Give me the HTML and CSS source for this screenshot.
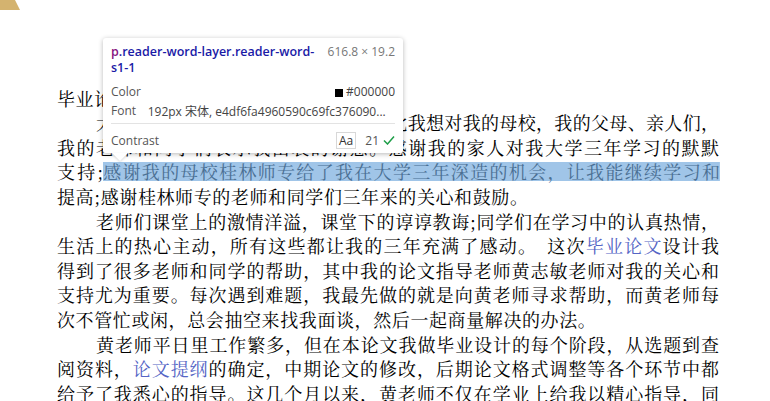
FILE: index.html
```html
<!DOCTYPE html>
<html lang="zh-CN">
<head>
  <meta charset="UTF-8">
  <title>毕业论文致谢</title>
  <meta name="viewport" content="width=device-width, initial-scale=1.0">
  <link rel="stylesheet" href="styles.css">
</head>
<body>

  <div class="corner"></div>

  <div class="page">
    <div class="line end">毕业论文致谢</div>
    <div class="line indent">大学三年学习时光已经接近尾声，在此我想对我的母校，我的父母、亲人们，</div>
    <div class="line">我的老师和同学们表示我由衷的谢意。感谢我的家人对我大学三年学习的默默</div>
    <div class="line split"><span class="lead">支持;</span><span class="hl">感谢我的母校桂林师专给了我在大学三年深造的机会，让我能继续学习和</span></div>
    <div class="line end">提高;感谢桂林师专的老师和同学们三年来的关心和鼓励。</div>
    <div class="line indent">老师们课堂上的激情洋溢，课堂下的谆谆教诲;同学们在学习中的认真热情，</div>
    <div class="line">生活上的热心主动，所有这些都让我的三年充满了感动。&ensp;这次<span class="link">毕业论文</span>设计我</div>
    <div class="line">得到了很多老师和同学的帮助，其中我的论文指导老师黄志敏老师对我的关心和</div>
    <div class="line">支持尤为重要。每次遇到难题，我最先做的就是向黄老师寻求帮助，而黄老师每</div>
    <div class="line end">次不管忙或闲，总会抽空来找我面谈，然后一起商量解决的办法。</div>
    <div class="line indent">黄老师平日里工作繁多，但在本论文我做毕业设计的每个阶段，从选题到查</div>
    <div class="line">阅资料，<span class="link">论文提纲</span>的确定，中期论文的修改，后期论文格式调整等各个环节中都</div>
    <div class="line">给予了我悉心的指导。这几个月以来，黄老师不仅在学业上给我以精心指导，同</div>
  </div>

  <!-- devtools element tooltip -->
  <div class="inspector">
    <div class="head">
      <div class="sel"><b>p</b>.reader-word-layer.reader-word-<br>s1-1</div>
      <div class="size">616.8 × 19.2</div>
    </div>
    <div class="row">
      <span class="label">Color</span>
      <span class="val right"><i class="swatch"></i>#000000</span>
    </div>
    <div class="row">
      <span class="label">Font</span>
      <span class="val">192px 宋体, e4df6fa4960590c69fc376090...</span>
    </div>
    <div class="sep"></div>
    <div class="row contrast">
      <span class="label">Contrast</span>
      <span class="aa">Aa</span>
      <span class="ratio">21</span>
      <svg class="check" width="12" height="10" viewBox="0 0 12 10"><polyline points="1,5.5 4.5,9 11,1.5" fill="none" stroke="#1e9e48" stroke-width="1.5"/></svg>
    </div>
  </div>

</body>
</html>
```

FILE: styles.css
```css
*{box-sizing:border-box}
body{
  margin:0;background:#fff;color:#000;
  font-family:"Noto Serif CJK SC","Noto Sans CJK SC",serif;
  overflow:hidden
}
.corner{
  position:absolute;left:0;top:0;width:20px;height:10px;
  background:#d4b36f;clip-path:polygon(0 0,15px 0,20px 10px,0 10px)
}
.page{padding:85.7px 0 0 57px;width:719px}
.line{
  height:24.6px;line-height:24.6px;font-size:18px;
  text-align:justify;text-align-last:justify
}
.indent{padding-left:39px}
.end{text-align-last:left;letter-spacing:.6px}
.link{color:#5565c5}
.split{display:flex}
.lead{flex:none;width:46.2px}
.hl{
  flex:none;width:616.8px;text-align:justify;text-align-last:justify;
  color:#4a6f93;
  background:linear-gradient(#a0c5e8,#a0c5e8) center/100% 19.2px no-repeat
}

/* inspector tooltip */
.inspector{
  position:absolute;left:103px;top:38px;width:300px;
  padding:6px 8px 1px;background:#fff;border-radius:3px;
  box-shadow:0 1px 5px rgba(0,0,0,.28);
  font-family:"Open Sans","Noto Sans CJK SC",sans-serif;font-size:12px;color:#555
}
.inspector::after{
  content:"";position:absolute;left:9px;bottom:-8px;
  border:8px solid transparent;border-bottom:none;border-top-color:#fff;
  filter:drop-shadow(0 1px 1px rgba(0,0,0,.15))
}
.head{display:flex;justify-content:space-between;height:32px}
.sel{color:#1a1aa6;font-weight:600;font-size:12.5px;line-height:16px;white-space:nowrap}
.sel b{color:#881280;font-weight:600}
.size{color:#777;line-height:16px}
.row{display:flex;align-items:center;height:19px}
.head+.row{margin-top:6px}
.label{flex:none;width:36.7px}
.val{flex:1;white-space:nowrap;overflow:hidden;color:#444}
.right{text-align:right}
.swatch{
  display:inline-block;width:8px;height:8px;background:#000;
  margin-right:3px;vertical-align:-0.5px
}
.sep{height:1px;background:#e3e3e3;margin-top:3px}
.contrast{height:24px;margin-top:4px}
.aa{
  margin-left:auto;border:1px solid #d8d8d8;height:17px;line-height:15px;
  padding:0 2px;color:#333
}
.ratio{margin-left:9px;color:#555}
.check{margin-left:4px}
```
